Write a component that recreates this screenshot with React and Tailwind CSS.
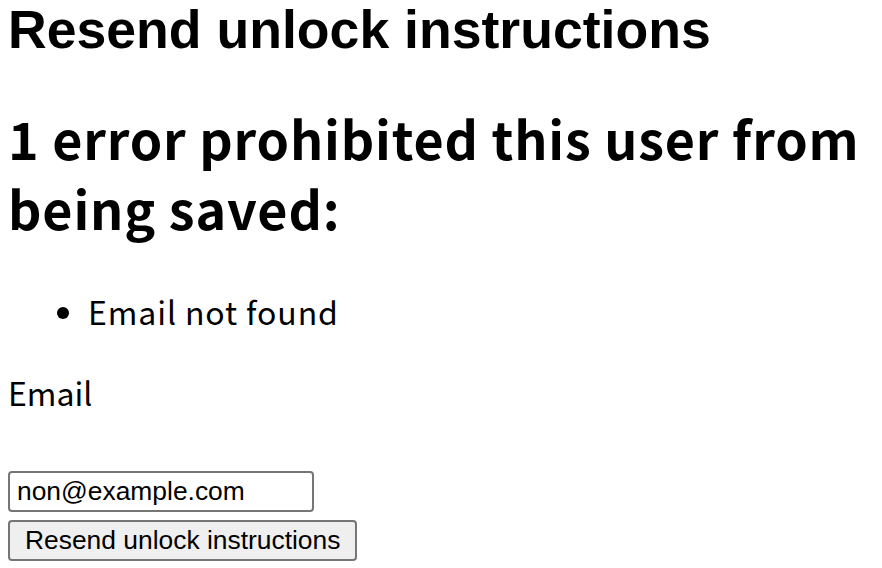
export default function App() {
  return (
    <div className="min-h-screen bg-white px-2 text-black">
      <h2 className="m-0 font-['Liberation_Sans',Arial,sans-serif] text-[53.6px] leading-[59px] font-bold">
        Resend unlock instructions
      </h2>

      <div className="mt-[44px]">
        <h2 className="m-0 font-['Noto_Sans_CJK_JP',sans-serif] text-[52px] leading-[70px] font-bold tracking-[0.85px]">
          1 error prohibited this user from being saved:
        </h2>
        <ul className="mt-[44px] list-disc pl-[80px] font-['Noto_Sans_CJK_JP',sans-serif] text-[32px] leading-[48px] tracking-[0.9px]">
          <li>Email not found</li>
        </ul>
      </div>

      <form className="mt-[33px]">
        <label className="block font-['Noto_Sans_CJK_JP',sans-serif] text-[32px] leading-[48px]">Email</label>
        <input
          type="email"
          defaultValue="non@example.com"
          className="mt-[55px] block h-[41px] w-[306px] rounded-[4px] border-2 border-[#767676] bg-white px-[7px] font-['Liberation_Sans',Arial,sans-serif] text-[26.4px] leading-none outline-none"
        />
        <button
          type="button"
          className="mt-[8px] block h-[41px] rounded-[4px] border-2 border-[#767676] bg-[#efefef] px-[15px] font-['Liberation_Sans',Arial,sans-serif] text-[26.4px] leading-none"
        >
          Resend unlock instructions
        </button>
      </form>
    </div>
  )
}
